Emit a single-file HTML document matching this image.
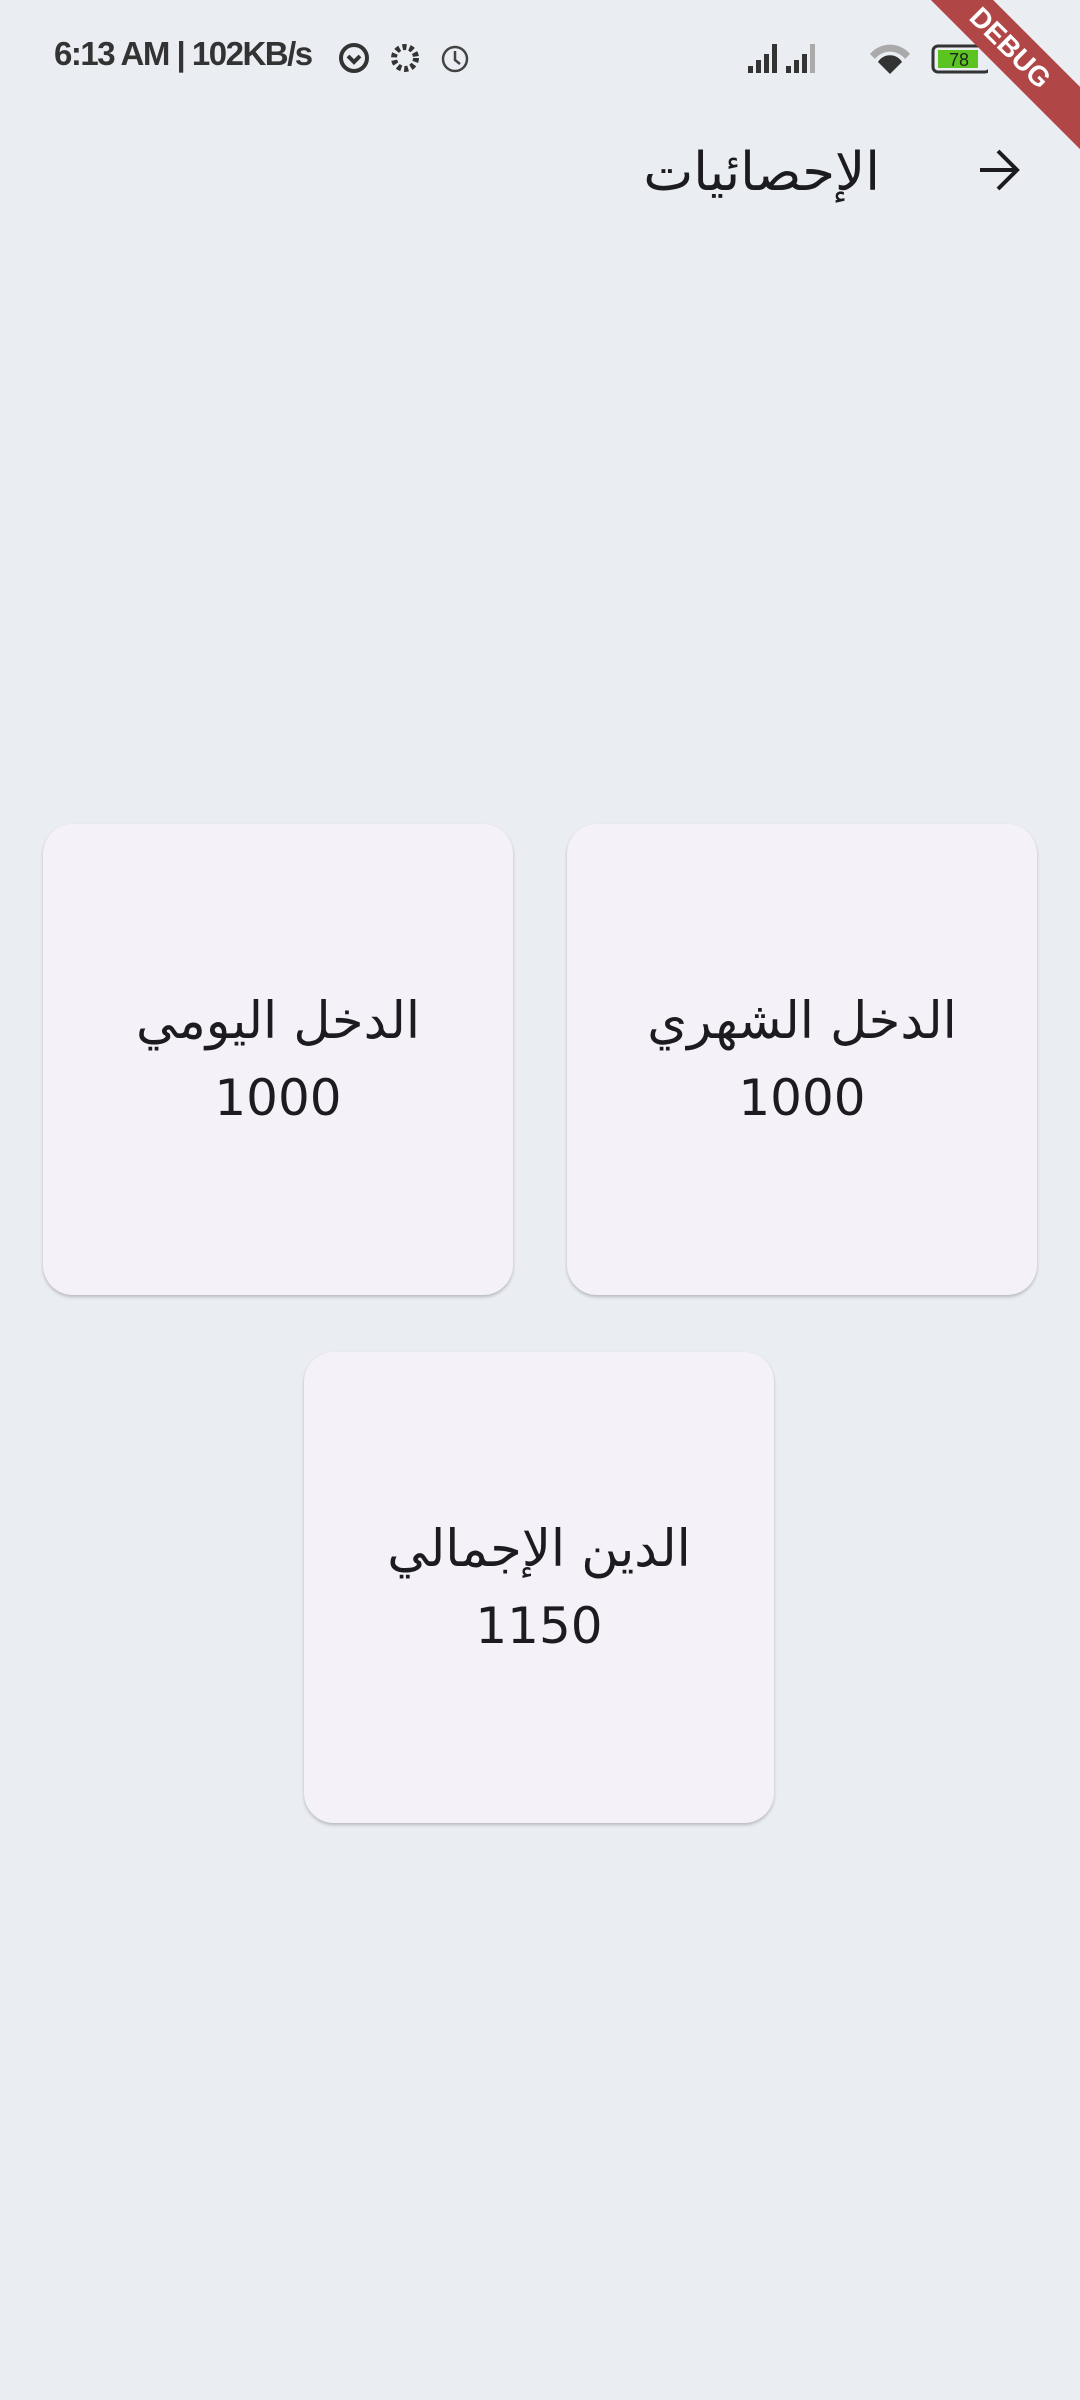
<!DOCTYPE html>
<html><head><meta charset="utf-8"><style>
body{margin:0;width:1080px;height:2400px;background:#eaedf2;position:relative;overflow:hidden;font-family:"DejaVu Sans","Liberation Sans",sans-serif;color:#1c1b1f}
.sb{position:absolute;left:54px;top:35px;font:bold 33px "Liberation Sans",sans-serif;color:#333;letter-spacing:-1.5px}
.card{position:absolute;width:470px;height:471px;background:#f5f1f8;border-radius:30px;box-shadow:0 2px 3px rgba(0,0,0,.22);display:flex;flex-direction:column;align-items:center;justify-content:center;font-size:51px;line-height:76px;text-align:center}
.num{font-size:50px}
.title{position:absolute;left:560px;width:320px;text-align:right;top:142px;font-size:53px;direction:rtl}
.ribbon{position:absolute;right:-60px;top:26px;width:260px;height:44px;background:#b04646;color:#fff;font:bold 28px "Liberation Sans",sans-serif;text-align:center;line-height:44px;transform:rotate(45deg);transform-origin:center}
</style></head><body>
<div class="sb">6:13 AM | 102KB/s</div>
<svg style="position:absolute;left:333px;top:38px" width="140" height="40" viewBox="0 0 140 40">
<circle cx="21" cy="20" r="13" fill="none" stroke="#333" stroke-width="4"/><path d="M15 18l6 6 6-6" stroke="#333" stroke-width="4" fill="none"/>
<circle cx="72" cy="20" r="11" fill="none" stroke="#333" stroke-width="6" stroke-dasharray="4 3"/>
<circle cx="122" cy="21" r="12" fill="none" stroke="#444" stroke-width="2.5"/><path d="M122 13v9l5 4" stroke="#444" stroke-width="2.5" fill="none"/>
</svg>
<svg style="position:absolute;left:748px;top:38px" width="240" height="40" viewBox="0 0 240 40">
<g fill="#333"><rect x="0" y="28" width="5" height="7"/><rect x="8" y="22" width="5" height="13"/><rect x="16" y="16" width="5" height="19"/><rect x="24" y="6" width="5" height="29"/>
<rect x="38" y="28" width="5" height="7"/><rect x="46" y="22" width="5" height="13"/><rect x="54" y="16" width="5" height="19"/></g><rect x="62" y="6" width="5" height="29" fill="#aaa"/>
<path d="M122 16a26 26 0 0 1 40 0l-5 5a19 19 0 0 0-30 0z" fill="#aaa"/><path d="M130 24a14 14 0 0 1 24 0l-12 12z" fill="#333"/>
<rect x="185" y="8" width="57" height="26" rx="5" fill="none" stroke="#333" stroke-width="3"/><rect x="190" y="12" width="40" height="18" fill="#5cc421"/><text x="201" y="28" font-family="Liberation Sans" font-size="18" fill="#222">78</text>
</svg>
<div class="ribbon">DEBUG</div>
<div class="title">الإحصائيات</div>
<svg style="position:absolute;left:976px;top:146px" width="48" height="48" viewBox="0 0 48 48"><path d="M4 24h38M22 5l19 19-19 19" stroke="#1c1b1f" stroke-width="4" fill="none"/></svg>
<div class="card" style="left:567px;top:824px"><div>الدخل الشهري</div><div class="num">1000</div></div>
<div class="card" style="left:43px;top:824px"><div>الدخل اليومي</div><div class="num">1000</div></div>
<div class="card" style="left:304px;top:1352px"><div>الدين الإجمالي</div><div class="num">1150</div></div>
</body></html>
